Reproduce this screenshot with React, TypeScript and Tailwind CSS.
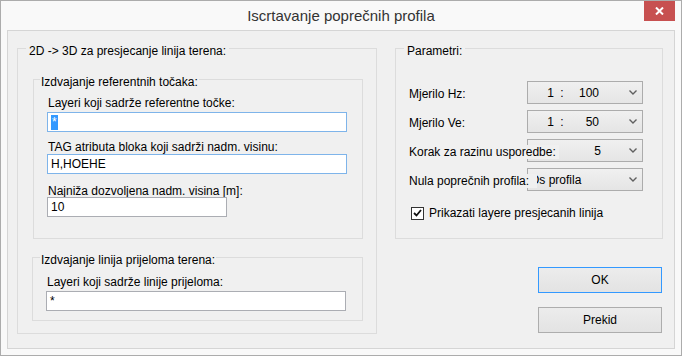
import type { ReactNode } from "react"

const Group = ({
  title,
  className,
  titleClass,
  children,
}: {
  title: string
  className: string
  titleClass: string
  children?: ReactNode
}) => {
  return (
    <div className={`border border-[#dcdcdc] flex flex-col ${className}`}>
      <div className={`-mt-[5px] w-fit bg-[#f0f0f0] leading-[14px] ${titleClass}`}>{title}</div>
      {children}
    </div>
  )
}

const TextBox = ({
  value,
  className,
  focused,
}: {
  value: ReactNode
  className: string
  focused?: boolean
}) => {
  return (
    <div
      className={`h-[20px] bg-white border flex items-center pl-[3px] leading-[14px] ${
        focused ? "border-[#7eb4ea]" : "border-[#abadb3]"
      } ${className}`}
    >
      {value}
    </div>
  )
}

const Chevron = () => (
  <svg width="8" height="5" viewBox="0 0 8 5" className="mr-[5px] shrink-0">
    <path d="M0.5 0.5 L4 4 L7.5 0.5" fill="none" stroke="#606060" strokeWidth="1.4" />
  </svg>
)

const Combo = ({ children }: { children: ReactNode }) => {
  return (
    <div className="w-[116px] h-[23px] shrink-0 border border-[#acacac] bg-linear-to-b from-[#f0f0f0] to-[#e5e5e5] flex items-center">
      <div className="flex-1 flex items-center leading-[14px] overflow-hidden whitespace-nowrap">{children}</div>
      <Chevron />
    </div>
  )
}

const Scale = ({ n }: { n: string }) => (
  <>
    <span className="w-[26px] text-right">1</span>
    <span className="w-[16px] text-center">:</span>
    <span className="w-[29px] text-right">{n}</span>
  </>
)

// label of a row; its background may hide the left part of the combo, as in the original form
const Row = ({
  label,
  children,
  className,
  cover = "pr-[3px]",
}: {
  label: string
  children: ReactNode
  className: string
  cover?: string
}) => {
  return (
    <div className={`flex items-start ${className}`}>
      <div className="w-[131px] shrink-0 pl-[13px] mt-[6px] whitespace-nowrap leading-[14px]">
        <span className={`relative z-10 bg-[#f0f0f0] ${cover}`}>{label}</span>
      </div>
      {children}
    </div>
  )
}

export default function App() {
  return (
    <div className="w-[682px] h-[356px] border border-[#acacac] bg-[#f9f9f9] flex flex-col px-[6px] pb-[6px] font-['Liberation_Sans',Arial,sans-serif] text-[12px] text-black">
      <div className="h-[29px] shrink-0 grid grid-cols-[1fr_auto_1fr] items-center">
        <div />
        <div className="text-[15px] text-[#333] leading-[18px]">Iscrtavanje poprečnih profila</div>
        <div className="justify-self-end self-start w-[31px] h-[20px] bg-[#c75050] flex items-center justify-center">
          <svg width="9" height="8" viewBox="0 0 9 8">
            <path d="M1 0.5 L8 7.5 M8 0.5 L1 7.5" stroke="white" strokeWidth="2" />
          </svg>
        </div>
      </div>

      <div className="h-[319px] shrink-0 border border-[#d5d5d5] bg-[#f0f0f0] flex items-start pl-[9px] pt-[17px]">
        <Group
          title="2D -> 3D za presjecanje linija terena:"
          className="w-[360px] h-[286px] shrink-0"
          titleClass="ml-[8px] px-[3px]"
        >
          <Group
            title="Izdvajanje referentnih točaka:"
            className="mt-[21px] ml-[15px] w-[330px] h-[160px]"
            titleClass="ml-[6px] px-[1px]"
          >
            <div className="mt-[7px] ml-[14px] leading-[14px]">Layeri koji sadrže referentne točke:</div>
            <TextBox
              focused
              className="mt-[2px] ml-[13px] w-[300px]"
              value={<span className="bg-[#3399ff] text-white px-[1px] leading-[15px]">*</span>}
            />
            <div className="mt-[8px] ml-[14px] leading-[14px]">TAG atributa bloka koji sadrži nadm. visinu:</div>
            <TextBox focused className="ml-[13px] w-[300px]" value="H,HOEHE" />
            <div className="mt-[10px] ml-[14px] leading-[14px]">Najniža dozvoljena nadm. visina [m]:</div>
            <TextBox className="-mt-[1px] ml-[13px] w-[180px]" value="10" />
          </Group>

          <Group
            title="Izdvajanje linija prijeloma terena:"
            className="mt-[18px] ml-[14px] w-[331px] h-[64px]"
            titleClass="ml-[7px] px-[1px]"
          >
            <div className="mt-[8px] ml-[14px] leading-[14px]">Layeri koji sadrže linije prijeloma:</div>
            <TextBox className="mt-[2px] ml-[13px] w-[300px]" value="*" />
          </Group>
        </Group>

        <div className="ml-[18px] w-[268px] flex flex-col">
          <Group title="Parametri:" className="h-[191px]" titleClass="ml-[8px] px-[3px]">
            <Row label="Mjerilo Hz:" className="mt-[23px]">
              <Combo>
                <Scale n="100" />
              </Combo>
            </Row>
            <Row label="Mjerilo Ve:" className="mt-[6px]">
              <Combo>
                <Scale n="50" />
              </Combo>
            </Row>
            <Row label="Korak za razinu usporedbe:" className="mt-[6px]">
              <Combo>
                <span className="w-[73px] text-right">5</span>
              </Combo>
            </Row>
            <Row label="Nula poprečnih profila:" className="mt-[6px]" cover="pr-[8px]">
              <Combo>
                <span className="pl-[2px]">Os profila</span>
              </Combo>
            </Row>
            <div className="mt-[15px] ml-[15px] flex items-center gap-[5px] leading-[14px]">
              <div className="w-[13px] h-[13px] border border-[#333] bg-white flex items-center justify-center">
                <svg width="9" height="8" viewBox="0 0 9 8">
                  <path d="M1 4 L3.5 6.5 L8 1" fill="none" stroke="#111" strokeWidth="1.8" />
                </svg>
              </div>
              <span>Prikazati layere presjecanih linija</span>
            </div>
          </Group>

          <div className="mt-[28px] self-end mr-[1px] w-[124px] h-[26px] border border-[#3399ff] bg-linear-to-b from-[#ececec] to-[#e3e3e3] flex items-center justify-center">
            OK
          </div>
          <div className="mt-[14px] self-end mr-[1px] w-[124px] h-[26px] border border-[#adadad] bg-linear-to-b from-[#ececec] to-[#e3e3e3] flex items-center justify-center">
            Prekid
          </div>
        </div>
      </div>
    </div>
  )
}
